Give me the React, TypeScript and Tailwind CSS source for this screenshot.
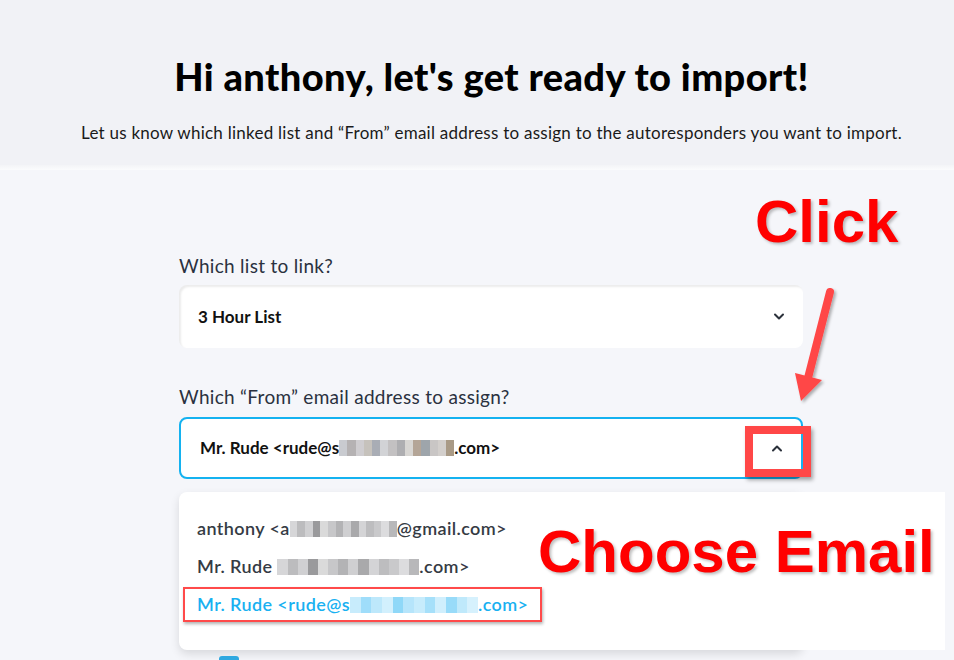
import React from "react";

const sans = "font-['Lato','Noto_Sans',sans-serif]";
const arial = "font-['Liberation_Sans',Arial,sans-serif]";

function Blur({ w, tones }: { w: number; tones: string[] }) {
  return (
    <span className="relative inline-flex h-[16px] align-[-2px]" style={{ width: w }}>
      {tones.map((t, i) => (
        <span key={i} className="h-full flex-1" style={{ backgroundColor: t }} />
      ))}
    </span>
  );
}

function Chevron({ up }: { up?: boolean }) {
  return (
    <svg width="12" height="8" viewBox="0 0 12 8" className="text-[#2b313b]">
      <path
        d={up ? "M2 6.5 6 2.5l4 4" : "M2 1.5l4 4 4-4"}
        fill="none"
        stroke="currentColor"
        strokeWidth="2"
        strokeLinecap="round"
        strokeLinejoin="round"
      />
    </svg>
  );
}

export default function App() {
  const gray = ["#c9cbd0", "#b5b2b3", "#cfcdd0", "#c6c2bc", "#a9adb5", "#d2d3d6", "#c3c1c2", "#aeaeb1", "#d8d6d3", "#b4a597", "#9ea5ab", "#c9c6c5", "#d3cfcc", "#a99a86"];
  const grayB = ["#d6d6d8", "#bcbcbe", "#d0d0d2", "#9a9a9c", "#dadada", "#c7c7c9", "#b3b3b5", "#cfcfd1", "#a9a9ab", "#d4d4d6", "#bdbdbf", "#c9c9cb", "#dcdcde", "#b8b8ba"];
  const blue = ["#c8ecfc", "#9fddfa", "#bde8fb", "#d2f0fd", "#8fd8f8", "#b6e5fb", "#c7ecfc", "#a6e0fa", "#d0effd", "#98dbf9", "#bfe9fb", "#d6f1fd"];

  return (
    <div className={`relative h-[660px] w-[954px] overflow-hidden bg-[#f5f6fa] ${sans}`}>
      <header className="flex h-[165px] flex-col items-center bg-[#f1f2f6] pl-[29px] pt-[53px]">
        <h1 className="whitespace-nowrap text-[38px] font-black leading-[46px] tracking-[0.4px] text-black">
          Hi anthony, let's get ready to import!
        </h1>
        <p className="mt-[22px] whitespace-nowrap text-[17px] leading-[24px] tracking-[0.25px] text-[#1a1a1a]">
          Let us know which linked list and “From” email address to assign to the autoresponders you want to import.
        </p>
      </header>
      <div className="h-[5px] bg-gradient-to-b from-[#f3f4f7] to-[#fbfcfd]" />

      <main className="ml-[179px] w-[624px] pt-[83px]">
        <label className="block text-[19px] leading-[26px] tracking-[0.3px] text-[#2a3140]">Which list to link?</label>
        <div className="mt-[6px] flex h-[63px] items-center justify-between rounded-[8px] bg-white pl-[19px] pr-[18px] shadow-[inset_2px_2px_2px_rgba(0,0,0,0.08)]">
          <span className="text-[17px] font-bold text-[#111]">3 Hour List</span>
          <Chevron />
        </div>

        <label className="mt-[36px] block text-[19px] leading-[26px] tracking-[0.3px] text-[#2a3140]">
          Which “From” email address to assign?
        </label>
        <div className="mt-[7px] flex h-[62px] items-center justify-between rounded-[8px] border-2 border-[#14b2f0] bg-white pl-[19px] pr-[18px]">
          <span className="text-[17px] font-bold text-[#111]">
            Mr. Rude &lt;rude@s<Blur w={115} tones={gray} />.com&gt;
          </span>
          <Chevron up />
        </div>

        <div className="mt-[13px] h-[158px] w-[624px] rounded-[8px] bg-white pb-[20px] pl-[18px] pt-[25px] shadow-[0_4px_10px_rgba(0,0,0,0.12)]">
          <ul className="flex flex-col gap-[15px] text-[18px] font-semibold leading-[23px] tracking-[0.4px] text-[#353b44]">
            <li>
              anthony &lt;a<Blur w={107} tones={grayB} />@gmail.com&gt;
            </li>
            <li>
              Mr. Rude <Blur w={142} tones={grayB} />.com&gt;
            </li>
            <li className="text-[#19b1f1]">
              Mr. Rude &lt;rude@s<Blur w={128} tones={blue} />.com&gt;
            </li>
          </ul>
        </div>
        <div className="ml-[40px] mt-[6px] h-[10px] w-[20px] rounded-[3px] bg-[#2fa8e0]" />
      </main>

      {/* annotations */}
      <div className="absolute left-[530px] top-[492px] flex h-[158px] w-[415px] items-start bg-white pl-[8px] pt-[26px]">
        <span className={`${arial} text-[60px] font-bold leading-[68px] text-[#ff0000] [text-shadow:2px_2px_3px_rgba(0,0,0,0.25)]`}>
          Choose Email
        </span>
      </div>
      <span className={`absolute left-[755px] top-[188px] ${arial} text-[60px] font-bold leading-[68px] text-[#ff0000] [text-shadow:2px_2px_3px_rgba(0,0,0,0.25)]`}>
        Click
      </span>
      <div className="absolute left-[745px] top-[426px] h-[51px] w-[66px] border-[8px] border-[#ff4747] shadow-[2px_3px_4px_rgba(0,0,0,0.35)]" />
      <div className="absolute left-[183px] top-[587px] h-[35px] w-[359px] border-2 border-[#ff4a4a] shadow-[1px_2px_3px_rgba(0,0,0,0.3)]" />
      <svg className="absolute left-[780px] top-[280px]" width="60" height="130" viewBox="780 280 60 130">
        <defs>
          <filter id="sh" x="-50%" y="-50%" width="200%" height="200%">
            <feDropShadow dx="2" dy="2" stdDeviation="1.5" floodColor="#000" floodOpacity="0.3" />
          </filter>
        </defs>
        <g filter="url(#sh)" fill="#ff4747">
          <line x1="830" y1="292" x2="808" y2="378" stroke="#ff4747" strokeWidth="8" strokeLinecap="round" />
          <polygon points="795,373 822,380 801,401" />
        </g>
      </svg>
    </div>
  );
}
